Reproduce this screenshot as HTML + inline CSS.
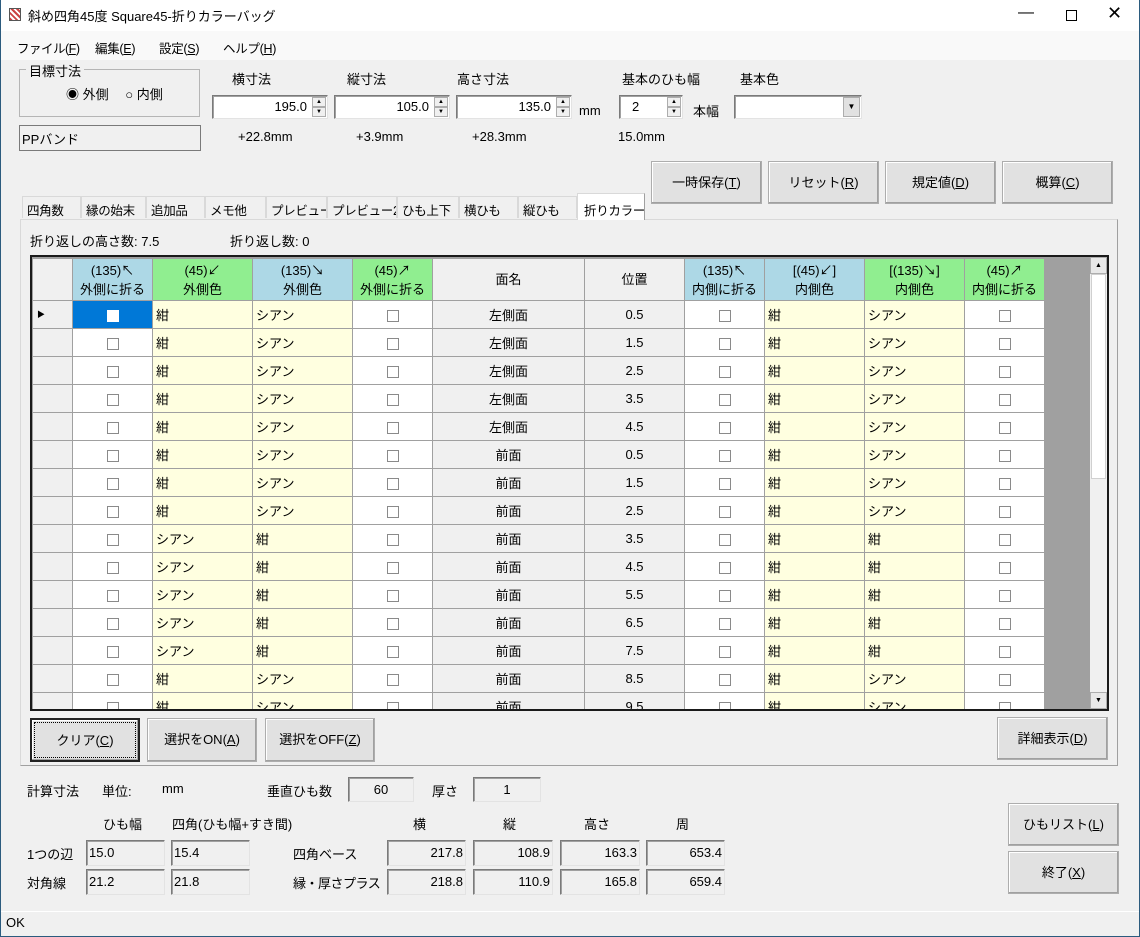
<!DOCTYPE html>
<html><head><meta charset="utf-8"><style>
*{box-sizing:border-box;margin:0;padding:0}
body{width:1140px;height:937px;overflow:hidden;background:#f0f0f0;font-family:"Liberation Sans","Noto Sans CJK JP",sans-serif;font-size:13px;color:#000;position:relative}
.a{position:absolute;white-space:nowrap}
.win{position:absolute;left:0;top:0;width:1140px;height:937px;border:1px solid #2b5b7e;border-top:none}
.title{left:0;top:0;width:1140px;height:31px;background:#fff}
.menu{left:1px;top:31px;width:1138px;height:29px;background:#f9f9f9}
.btn{position:absolute;background:#e1e1e1;border:1px solid #adadad;box-shadow:inset -1px -1px 0 #a0a0a0,inset 1px 1px 0 #fff;text-align:center;font-size:13px}
.btn span{text-decoration:underline}
.sunk{position:absolute;background:#fff;border:1px solid #7a7a7a;border-right-color:#e3e3e3;border-bottom-color:#e3e3e3;box-shadow:inset 1px 1px 0 #a0a0a0}
.ro{position:absolute;background:#f0f0f0;border:1px solid #e3e3e3;border-left-color:#7a7a7a;border-top-color:#7a7a7a;box-shadow:inset 1px 1px 0 #a0a0a0;padding:3px 2px 0;line-height:18px}
.spin{position:absolute;right:1px;top:1px;width:14px;height:20px;background:#f0f0f0}
.spin i{display:block;height:10px;border:1px solid #adadad;font-size:6px;line-height:8px;text-align:center;font-style:normal}
.tab{position:absolute;top:196px;height:22px;border:1px solid #d9d9d9;border-bottom:none;background:#f0f0f0;padding:3px 0 0 4px;font-size:12.5px;overflow:hidden;white-space:nowrap;letter-spacing:-0.3px}
table{border-collapse:collapse;table-layout:fixed;position:absolute;left:32px;top:258px}
td{border:1px solid #a0a0a0;height:28px;padding:0 3px;overflow:hidden;white-space:nowrap}
th{border:1px solid #a0a0a0;height:42px;font-weight:normal;line-height:19px;font-size:13px}
.rh{background:#f0f0f0}
.w{background:#fff;text-align:center}
.y{background:#ffffe0}
.g{background:#f0f0f0;text-align:center}
.hb{background:#add8e6}.hg{background:#90ee90}
.cb{display:inline-block;width:12px;height:12px;border:1px solid #8a8a8a;background:#fff;vertical-align:middle}
</style></head><body>
<div class="a title"></div>
<div class="a" style="left:9px;top:8px;width:12px;height:13px;border:1px solid #555;background:repeating-linear-gradient(45deg,#c44 0 2px,#fff 2px 4px)"></div>
<div class="a" style="left:28px;top:6px;font-size:13px">斜め四角45度 Square45-折りカラーバッグ</div>
<div class="a" style="left:1018px;top:4px;font-size:16px">&#8212;</div>
<div class="a" style="left:1066px;top:10px;width:11px;height:11px;border:1px solid #000"></div>
<div class="a" style="left:1107px;top:3px;font-size:18px">✕</div>
<div class="a menu"></div>
<div class="a" style="left:17px;top:38px;font-size:12.5px;letter-spacing:-0.5px">ファイル(<u>F</u>)</div>
<div class="a" style="left:95px;top:38px;font-size:12.5px;letter-spacing:-0.3px">編集(<u>E</u>)</div>
<div class="a" style="left:159px;top:38px;font-size:12.5px;letter-spacing:-0.3px">設定(<u>S</u>)</div>
<div class="a" style="left:223px;top:38px;font-size:12.5px;letter-spacing:-0.3px">ヘルプ(<u>H</u>)</div>

<div class="a" style="left:19px;top:69px;width:181px;height:48px;border:1px solid #b5b5b5"></div>
<div class="a" style="left:26px;top:61px;background:#f0f0f0;padding:0 3px">目標寸法</div>
<div class="a" style="left:66px;top:84px">◉ 外側　 ○ 内側</div>
<div class="a" style="left:19px;top:125px;width:182px;height:26px;border:1px solid #7a7a7a;padding:3px 2px">PPバンド</div>

<div class="a" style="left:232px;top:69px">横寸法</div>
<div class="a" style="left:347px;top:69px">縦寸法</div>
<div class="a" style="left:457px;top:69px">高さ寸法</div>
<div class="a" style="left:622px;top:69px">基本のひも幅</div>
<div class="a" style="left:740px;top:69px">基本色</div>
<div class="sunk" style="left:212px;top:95px;width:116px;height:24px"><div class="a" style="right:20px;top:3px">195.0</div><div class="spin"><i>▲</i><i>▼</i></div></div>
<div class="sunk" style="left:334px;top:95px;width:116px;height:24px"><div class="a" style="right:20px;top:3px">105.0</div><div class="spin"><i>▲</i><i>▼</i></div></div>
<div class="sunk" style="left:456px;top:95px;width:116px;height:24px"><div class="a" style="right:20px;top:3px">135.0</div><div class="spin"><i>▲</i><i>▼</i></div></div>
<div class="a" style="left:579px;top:103px">mm</div>
<div class="sunk" style="left:619px;top:95px;width:64px;height:24px"><div class="a" style="left:12px;top:3px">2</div><div class="spin"><i>▲</i><i>▼</i></div></div>
<div class="a" style="left:693px;top:101px">本幅</div>
<div class="sunk" style="left:734px;top:95px;width:128px;height:24px"><div class="a" style="right:1px;top:1px;width:17px;height:20px;background:#e1e1e1;border:1px solid #adadad;font-size:8px;text-align:center;line-height:18px">▼</div></div>
<div class="a" style="left:238px;top:129px">+22.8mm</div>
<div class="a" style="left:356px;top:129px">+3.9mm</div>
<div class="a" style="left:472px;top:129px">+28.3mm</div>
<div class="a" style="left:618px;top:129px">15.0mm</div>

<div class="btn" style="left:651px;top:161px;width:111px;height:43px;line-height:41px">一時保存(<span>T</span>)</div>
<div class="btn" style="left:768px;top:161px;width:111px;height:43px;line-height:41px">リセット(<span>R</span>)</div>
<div class="btn" style="left:885px;top:161px;width:111px;height:43px;line-height:41px">規定値(<span>D</span>)</div>
<div class="btn" style="left:1002px;top:161px;width:111px;height:43px;line-height:41px">概算(<span>C</span>)</div>

<div class="a" style="left:20px;top:219px;width:1098px;height:547px;border:1px solid #d9d9d9;border-right-color:#a0a0a0;border-bottom-color:#a0a0a0;background:#f0f0f0"></div>
<div class="tab" style="left:22px;width:59px">四角数</div>
<div class="tab" style="left:81px;width:65px">縁の始末</div>
<div class="tab" style="left:146px;width:59px">追加品</div>
<div class="tab" style="left:205px;width:61px">メモ他</div>
<div class="tab" style="left:266px;width:61px">プレビュー</div>
<div class="tab" style="left:327px;width:70px">プレビュー2</div>
<div class="tab" style="left:397px;width:62px">ひも上下</div>
<div class="tab" style="left:459px;width:59px">横ひも</div>
<div class="tab" style="left:518px;width:59px">縦ひも</div>
<div class="tab" style="left:577px;top:193px;width:68px;height:27px;background:#fff;border-color:#d9d9d9;border-right-color:#a0a0a0;padding-top:6px;padding-left:6px">折りカラー</div>

<div class="a" style="left:30px;top:231px">折り返しの高さ数: 7.5</div>
<div class="a" style="left:230px;top:231px">折り返し数: 0</div>

<div class="a" style="left:30px;top:255px;width:1079px;height:456px;border:2px solid #1a1a1a;background:#a0a0a0;overflow:hidden">
<table style="left:0;top:1px">
<colgroup><col style="width:40px"><col style="width:80px"><col style="width:100px"><col style="width:100px"><col style="width:80px"><col style="width:152px"><col style="width:100px"><col style="width:80px"><col style="width:100px"><col style="width:100px"><col style="width:80px"></colgroup>
<tr><th class="rh"></th><th class="hb">(135)↖<br>外側に折る</th><th class="hg">(45)↙<br>外側色</th><th class="hb">(135)↘<br>外側色</th><th class="hg">(45)↗<br>外側に折る</th><th class="rh">面名</th><th class="rh">位置</th><th class="hb">(135)↖<br>内側に折る</th><th class="hb">[(45)↙]<br>内側色</th><th class="hg">[(135)↘]<br>内側色</th><th class="hg">(45)↗<br>内側に折る</th></tr>
<tr><td class="rh" style="font-size:8px;padding-left:4px">▶</td><td class="w" style="background:#0078d7"><i class="cb" style="border-color:#fff"></i></td><td class="y">紺</td><td class="y">シアン</td><td class="w"><i class="cb"></i></td><td class="g">左側面</td><td class="g">0.5</td><td class="w"><i class="cb"></i></td><td class="y">紺</td><td class="y">シアン</td><td class="w"><i class="cb"></i></td></tr>
<tr><td class="rh"></td><td class="w"><i class="cb"></i></td><td class="y">紺</td><td class="y">シアン</td><td class="w"><i class="cb"></i></td><td class="g">左側面</td><td class="g">1.5</td><td class="w"><i class="cb"></i></td><td class="y">紺</td><td class="y">シアン</td><td class="w"><i class="cb"></i></td></tr>
<tr><td class="rh"></td><td class="w"><i class="cb"></i></td><td class="y">紺</td><td class="y">シアン</td><td class="w"><i class="cb"></i></td><td class="g">左側面</td><td class="g">2.5</td><td class="w"><i class="cb"></i></td><td class="y">紺</td><td class="y">シアン</td><td class="w"><i class="cb"></i></td></tr>
<tr><td class="rh"></td><td class="w"><i class="cb"></i></td><td class="y">紺</td><td class="y">シアン</td><td class="w"><i class="cb"></i></td><td class="g">左側面</td><td class="g">3.5</td><td class="w"><i class="cb"></i></td><td class="y">紺</td><td class="y">シアン</td><td class="w"><i class="cb"></i></td></tr>
<tr><td class="rh"></td><td class="w"><i class="cb"></i></td><td class="y">紺</td><td class="y">シアン</td><td class="w"><i class="cb"></i></td><td class="g">左側面</td><td class="g">4.5</td><td class="w"><i class="cb"></i></td><td class="y">紺</td><td class="y">シアン</td><td class="w"><i class="cb"></i></td></tr>
<tr><td class="rh"></td><td class="w"><i class="cb"></i></td><td class="y">紺</td><td class="y">シアン</td><td class="w"><i class="cb"></i></td><td class="g">前面</td><td class="g">0.5</td><td class="w"><i class="cb"></i></td><td class="y">紺</td><td class="y">シアン</td><td class="w"><i class="cb"></i></td></tr>
<tr><td class="rh"></td><td class="w"><i class="cb"></i></td><td class="y">紺</td><td class="y">シアン</td><td class="w"><i class="cb"></i></td><td class="g">前面</td><td class="g">1.5</td><td class="w"><i class="cb"></i></td><td class="y">紺</td><td class="y">シアン</td><td class="w"><i class="cb"></i></td></tr>
<tr><td class="rh"></td><td class="w"><i class="cb"></i></td><td class="y">紺</td><td class="y">シアン</td><td class="w"><i class="cb"></i></td><td class="g">前面</td><td class="g">2.5</td><td class="w"><i class="cb"></i></td><td class="y">紺</td><td class="y">シアン</td><td class="w"><i class="cb"></i></td></tr>
<tr><td class="rh"></td><td class="w"><i class="cb"></i></td><td class="y">シアン</td><td class="y">紺</td><td class="w"><i class="cb"></i></td><td class="g">前面</td><td class="g">3.5</td><td class="w"><i class="cb"></i></td><td class="y">紺</td><td class="y">紺</td><td class="w"><i class="cb"></i></td></tr>
<tr><td class="rh"></td><td class="w"><i class="cb"></i></td><td class="y">シアン</td><td class="y">紺</td><td class="w"><i class="cb"></i></td><td class="g">前面</td><td class="g">4.5</td><td class="w"><i class="cb"></i></td><td class="y">紺</td><td class="y">紺</td><td class="w"><i class="cb"></i></td></tr>
<tr><td class="rh"></td><td class="w"><i class="cb"></i></td><td class="y">シアン</td><td class="y">紺</td><td class="w"><i class="cb"></i></td><td class="g">前面</td><td class="g">5.5</td><td class="w"><i class="cb"></i></td><td class="y">紺</td><td class="y">紺</td><td class="w"><i class="cb"></i></td></tr>
<tr><td class="rh"></td><td class="w"><i class="cb"></i></td><td class="y">シアン</td><td class="y">紺</td><td class="w"><i class="cb"></i></td><td class="g">前面</td><td class="g">6.5</td><td class="w"><i class="cb"></i></td><td class="y">紺</td><td class="y">紺</td><td class="w"><i class="cb"></i></td></tr>
<tr><td class="rh"></td><td class="w"><i class="cb"></i></td><td class="y">シアン</td><td class="y">紺</td><td class="w"><i class="cb"></i></td><td class="g">前面</td><td class="g">7.5</td><td class="w"><i class="cb"></i></td><td class="y">紺</td><td class="y">紺</td><td class="w"><i class="cb"></i></td></tr>
<tr><td class="rh"></td><td class="w"><i class="cb"></i></td><td class="y">紺</td><td class="y">シアン</td><td class="w"><i class="cb"></i></td><td class="g">前面</td><td class="g">8.5</td><td class="w"><i class="cb"></i></td><td class="y">紺</td><td class="y">シアン</td><td class="w"><i class="cb"></i></td></tr>
<tr><td class="rh"></td><td class="w"><i class="cb"></i></td><td class="y">紺</td><td class="y">シアン</td><td class="w"><i class="cb"></i></td><td class="g">前面</td><td class="g">9.5</td><td class="w"><i class="cb"></i></td><td class="y">紺</td><td class="y">シアン</td><td class="w"><i class="cb"></i></td></tr>
</table>
<div class="a" style="left:1058px;top:0;width:17px;height:452px;background:#f0f0f0">
<div class="a" style="left:0;top:0;width:17px;height:17px;border:1px solid #adadad;background:#e8e8e8;font-size:7px;text-align:center;line-height:15px">▲</div>
<div class="a" style="left:1px;top:17px;width:15px;height:205px;background:#fff;border:1px solid #d0d0d0"></div>
<div class="a" style="left:0;top:435px;width:17px;height:17px;border:1px solid #adadad;background:#e8e8e8;font-size:7px;text-align:center;line-height:15px">▼</div>
</div>
</div>

<div class="btn" style="left:30px;top:718px;width:110px;height:44px;line-height:42px;border:2px solid #222;outline:1px dotted #000;outline-offset:-5px">クリア(<span>C</span>)</div>
<div class="btn" style="left:147px;top:718px;width:110px;height:44px;line-height:42px">選択をON(<span>A</span>)</div>
<div class="btn" style="left:265px;top:718px;width:110px;height:44px;line-height:42px">選択をOFF(<span>Z</span>)</div>
<div class="btn" style="left:997px;top:717px;width:111px;height:43px;line-height:41px">詳細表示(<span>D</span>)</div>

<div class="a" style="left:27px;top:781px">計算寸法</div>
<div class="a" style="left:102px;top:781px">単位:</div>
<div class="a" style="left:162px;top:781px">mm</div>
<div class="a" style="left:267px;top:781px">垂直ひも数</div>
<div class="ro" style="left:348px;top:777px;width:66px;height:25px;text-align:center">60</div>
<div class="a" style="left:432px;top:781px">厚さ</div>
<div class="ro" style="left:473px;top:777px;width:68px;height:25px;text-align:center">1</div>

<div class="a" style="left:103px;top:814px">ひも幅</div>
<div class="a" style="left:172px;top:814px">四角(ひも幅+すき間)</div>
<div class="a" style="left:413px;top:814px">横</div>
<div class="a" style="left:503px;top:814px">縦</div>
<div class="a" style="left:584px;top:814px">高さ</div>
<div class="a" style="left:676px;top:814px">周</div>

<div class="a" style="left:27px;top:844px">1つの辺</div>
<div class="a" style="left:27px;top:873px">対角線</div>
<div class="a" style="left:293px;top:844px">四角ベース</div>
<div class="a" style="left:293px;top:873px;letter-spacing:-0.5px">縁・厚さプラス</div>
<div class="ro" style="left:86px;top:840px;width:79px;height:26px">15.0</div>
<div class="ro" style="left:171px;top:840px;width:79px;height:26px">15.4</div>
<div class="ro" style="left:86px;top:869px;width:79px;height:26px">21.2</div>
<div class="ro" style="left:171px;top:869px;width:79px;height:26px">21.8</div>
<div class="ro" style="left:387px;top:840px;width:79px;height:26px;text-align:right">217.8</div>
<div class="ro" style="left:473px;top:840px;width:80px;height:26px;text-align:right">108.9</div>
<div class="ro" style="left:560px;top:840px;width:80px;height:26px;text-align:right">163.3</div>
<div class="ro" style="left:646px;top:840px;width:79px;height:26px;text-align:right">653.4</div>
<div class="ro" style="left:387px;top:869px;width:79px;height:26px;text-align:right">218.8</div>
<div class="ro" style="left:473px;top:869px;width:80px;height:26px;text-align:right">110.9</div>
<div class="ro" style="left:560px;top:869px;width:80px;height:26px;text-align:right">165.8</div>
<div class="ro" style="left:646px;top:869px;width:79px;height:26px;text-align:right">659.4</div>

<div class="btn" style="left:1008px;top:803px;width:111px;height:43px;line-height:41px">ひもリスト(<span>L</span>)</div>
<div class="btn" style="left:1008px;top:851px;width:111px;height:43px;line-height:41px">終了(<span>X</span>)</div>

<div class="a" style="left:1px;top:911px;width:1138px;height:1px;background:#fff"></div>
<div class="a" style="left:6px;top:915px">OK</div>
<div class="win"></div>
</body></html>
